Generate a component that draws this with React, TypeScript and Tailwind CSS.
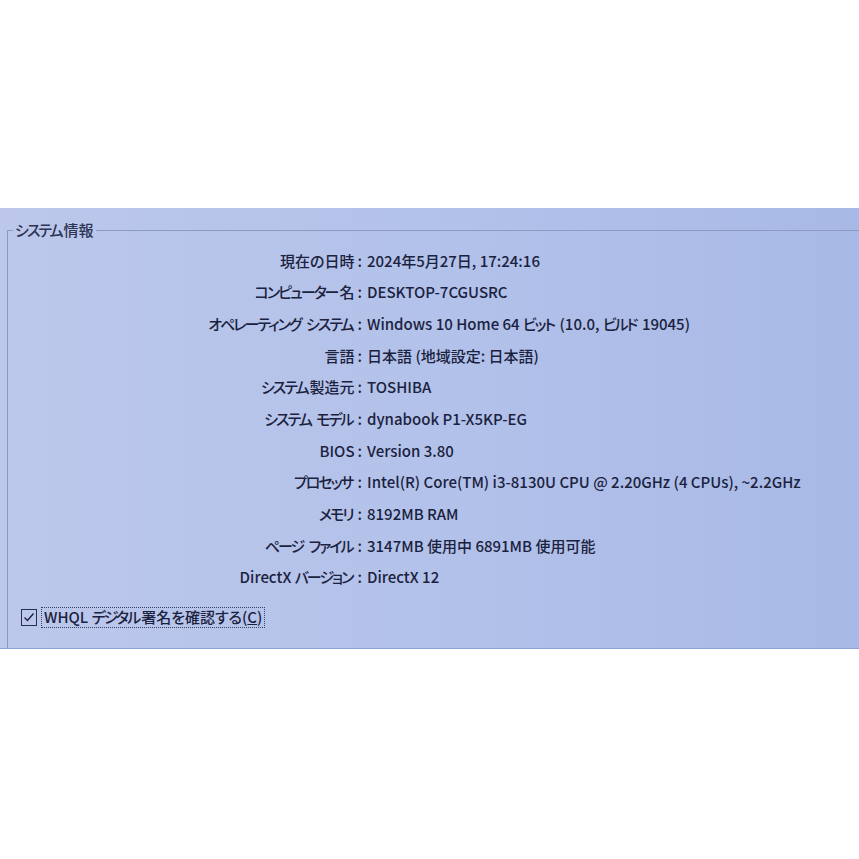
import React from 'react';

const rows: [string, string][] = [
  ['現在の日時', '2024年5月27日, 17:24:16'],
  ['コンピューター名', 'DESKTOP-7CGUSRC'],
  ['オペレーティング システム', 'Windows 10 Home 64 ビット (10.0, ビルド 19045)'],
  ['言語', '日本語 (地域設定: 日本語)'],
  ['システム製造元', 'TOSHIBA'],
  ['システム モデル', 'dynabook P1-X5KP-EG'],
  ['BIOS', 'Version 3.80'],
  ['プロセッサ', 'Intel(R) Core(TM) i3-8130U CPU @ 2.20GHz (4 CPUs), ~2.2GHz'],
  ['メモリ', '8192MB RAM'],
  ['ページ ファイル', '3147MB 使用中 6891MB 使用可能'],
  ['DirectX バージョン', 'DirectX 12'],
];

// katakana in the original UI font is much narrower, so squeeze those runs
function Narrow({ text }: { text: string }) {
  const parts = text.split(/([\u30A0-\u30FF]+)/);
  return (
    <span>
      {parts.map((p, i) =>
        /[\u30A0-\u30FF]/.test(p) ? (
          <span key={i} className="tracking-[-2px] mr-[2px]">{p}</span>
        ) : (
          <React.Fragment key={i}>{p}</React.Fragment>
        )
      )}
    </span>
  );
}

export default function App() {
  return (
    <div className="w-[859px] h-[859px] bg-white flex flex-col font-['Noto_Sans_CJK_JP','Noto_Sans',sans-serif] font-medium [font-feature-settings:'palt'] text-[#1b2240]">
      <div className="h-[208px] shrink-0" />
      <div className="h-[441px] shrink-0 flex flex-col bg-linear-to-r from-[#bcc7eb] via-[#b3c2ea] to-[#a8b9e6] border-b border-[#8ea2da]">
        <fieldset className="flex-1 ml-[7px] mt-[12px] border-l border-t border-[#8c99c0] min-w-0">
          <legend className="ml-[5px] px-[2px] text-[15px] leading-[20px] text-[#2c3454]">
            <Narrow text="システム情報" />
          </legend>
          <div className="pt-[5px] grid grid-cols-[354px_1fr]">
            {rows.map(([label, value]) => (
              <React.Fragment key={label}>
                <div className="h-[31.7px] flex items-center justify-end text-[15px] whitespace-pre">
                  <Narrow text={label} />
                  <span className="ml-[3px]">:</span>
                </div>
                <div className="h-[31.7px] flex items-center pl-[5px] text-[15px] whitespace-pre">
                  <Narrow text={value} />
                </div>
              </React.Fragment>
            ))}
          </div>
          <div className="mt-[13px] ml-[13px] flex items-center gap-[4px]">
            <div className="w-[16px] h-[17px] border-[1.5px] border-[#283050] flex items-center justify-center">
              <svg width="12" height="12" viewBox="0 0 12 12" fill="none">
                <path d="M1.5 6.5 L4.5 9.5 L10.5 2.5" stroke="#1b2240" strokeWidth="1.4" />
              </svg>
            </div>
            <div className="h-[21px] flex items-center px-[2px] border border-dotted border-[#3a4262] text-[15px] whitespace-pre">
              <span>
                <Narrow text="WHQL デジタル" />署名を確認する(<span className="underline">C</span>)
              </span>
            </div>
          </div>
        </fieldset>
      </div>
    </div>
  );
}
